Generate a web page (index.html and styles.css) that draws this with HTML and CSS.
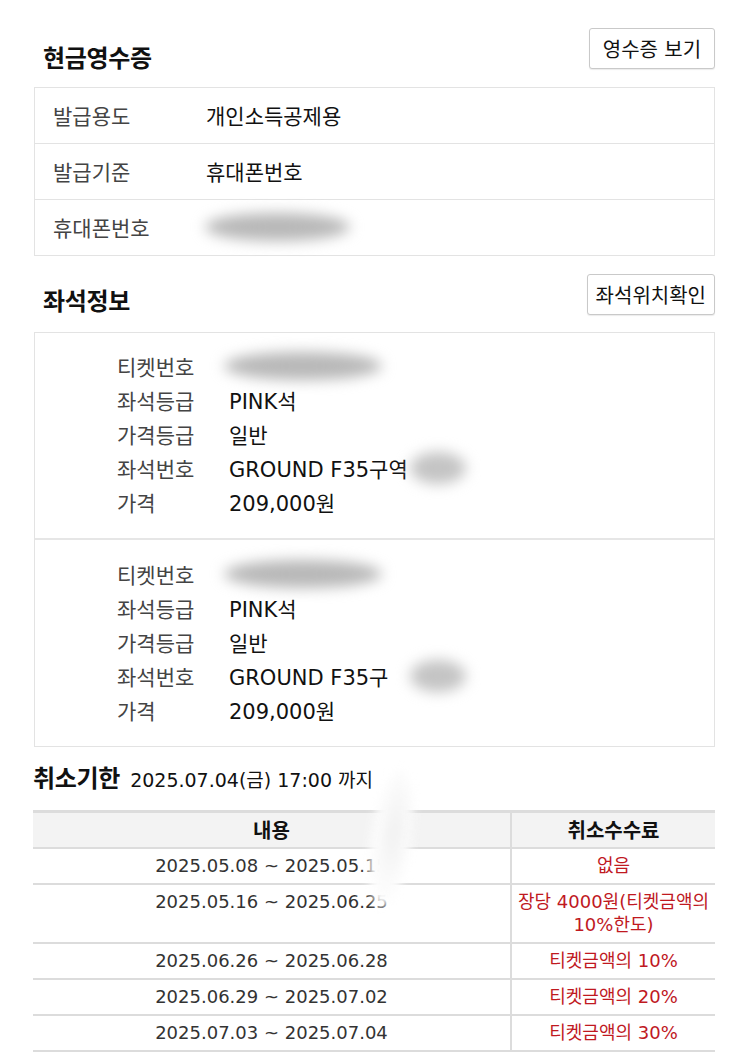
FILE: index.html
```html
<!DOCTYPE html>
<html lang="ko">
<head>
<meta charset="utf-8">
<link rel="stylesheet" href="styles.css">
</head>
<body>
<div class="page">
  <div class="sec-head first">
    <h2 class="sec-title">현금영수증</h2>
    <button class="btn">영수증 보기</button>
  </div>
  <div class="info-table">
    <div class="info-row"><span class="info-label">발급용도</span><span class="info-value">개인소득공제용</span></div>
    <div class="info-row"><span class="info-label">발급기준</span><span class="info-value">휴대폰번호</span></div>
    <div class="info-row"><span class="info-label">휴대폰번호</span><span class="info-value"><span class="blur blur-phone"></span></span></div>
  </div>

  <div class="sec-head">
    <h2 class="sec-title">좌석정보</h2>
    <button class="btn">좌석위치확인</button>
  </div>
  <div class="seat-box">
    <div class="seat-block">
      <div class="seat-line"><span class="seat-label">티켓번호</span><span class="seat-value"><span class="blur blur-ticket"></span></span></div>
      <div class="seat-line"><span class="seat-label">좌석등급</span><span class="seat-value">PINK석</span></div>
      <div class="seat-line"><span class="seat-label">가격등급</span><span class="seat-value">일반</span></div>
      <div class="seat-line"><span class="seat-label">좌석번호</span><span class="seat-value">GROUND F35구역<span class="blur blur-seat"></span></span></div>
      <div class="seat-line"><span class="seat-label">가격</span><span class="seat-value">209,000원</span></div>
    </div>
    <div class="seat-block">
      <div class="seat-line"><span class="seat-label">티켓번호</span><span class="seat-value"><span class="blur blur-ticket"></span></span></div>
      <div class="seat-line"><span class="seat-label">좌석등급</span><span class="seat-value">PINK석</span></div>
      <div class="seat-line"><span class="seat-label">가격등급</span><span class="seat-value">일반</span></div>
      <div class="seat-line"><span class="seat-label">좌석번호</span><span class="seat-value">GROUND F35구<span class="blur blur-seat2"></span></span></div>
      <div class="seat-line"><span class="seat-label">가격</span><span class="seat-value">209,000원</span></div>
    </div>
  </div>

  <div class="cancel-head">
    <h2 class="sec-title">취소기한</h2>
    <span class="cancel-date">2025.07.04(금) 17:00 까지</span>
  </div>
  <div class="fee-wrap">
    <table class="fee-table">
      <thead>
        <tr><th class="col-a">내용</th><th class="col-b">취소수수료</th></tr>
      </thead>
      <tbody>
        <tr><td>2025.05.08 ~ 2025.05.15</td><td class="red">없음</td></tr>
        <tr><td>2025.05.16 ~ 2025.06.25</td><td class="red">장당 4000원(티켓금액의 10%한도)</td></tr>
        <tr><td>2025.06.26 ~ 2025.06.28</td><td class="red">티켓금액의 10%</td></tr>
        <tr><td>2025.06.29 ~ 2025.07.02</td><td class="red">티켓금액의 20%</td></tr>
        <tr><td>2025.07.03 ~ 2025.07.04</td><td class="red">티켓금액의 30%</td></tr>
      </tbody>
    </table>
    <div class="streak"></div>
  </div>
</div>
</body>
</html>
```

FILE: styles.css
```css
* { box-sizing: border-box; }
html, body {
  margin: 0;
  padding: 0;
  background: #ffffff;
}
body {
  font-family: "DejaVu Sans", "Noto Sans CJK KR", sans-serif;
  color: #111;
}
.page {
  width: 750px;
  padding: 0 35px 0 34px;
}
.sec-head {
  display: flex;
  justify-content: space-between;
  align-items: center;
  margin-top: 18px;
  height: 41px;
}
.sec-head.first {
  margin-top: 0;
  padding-top: 28px;
  height: 69px;
}
.sec-title {
  margin: 0;
  font-family: "Noto Sans CJK KR", sans-serif;
  font-size: 24px;
  font-weight: 700;
  color: #111;
  line-height: 30px;
  padding-left: 9px;
  letter-spacing: -0.3px;
}
.sec-head.first .sec-title { padding-top: 17px; }
.sec-head .sec-title { padding-top: 11px; }
.btn {
  font-family: "DejaVu Sans", "Noto Sans CJK KR", sans-serif;
  font-size: 20px;
  color: #111;
  background: #fff;
  border: 1px solid #c9c9c9;
  border-radius: 3px;
  height: 41px;
  padding: 0 8px;
  box-shadow: 0 1px 1px rgba(0,0,0,0.08);
}
.sec-head.first .btn { width: 114px; padding: 0; }
.sec-head .btn { min-width: 126px; }

.info-table {
  margin-top: 18px;
  border: 1px solid #e3e3e3;
}
.info-row {
  display: flex;
  align-items: center;
  height: 56px;
  border-top: 1px solid #e3e3e3;
  font-size: 21px;
  padding-left: 18px;
  padding-bottom: 2px;
}
.info-row:first-child { border-top: none; height: 55px; }
.info-label {
  width: 153px;
  color: #444;
}
.info-value {
  color: #111;
}

.blur {
  display: inline-block;
  vertical-align: middle;
  background: #b8b8b8;
  border-radius: 50%;
  filter: blur(7px);
}
.blur-phone { width: 145px; height: 28px; margin-left: -1px; }
.blur-ticket { width: 158px; height: 28px; margin-left: -5px; }
.blur-seat { width: 56px; height: 32px; margin-left: 2px; background: #c4c4c4; }
.blur-seat2 { width: 56px; height: 32px; margin-left: 22px; background: #c4c4c4; }

.seat-box {
  margin-top: 17px;
  border: 1px solid #e3e3e3;
}
.seat-block {
  padding: 16px 0 19px 82px;
}
.seat-block + .seat-block {
  border-top: 2px solid #e6e6e6;
  padding-top: 17px;
}
.seat-line {
  display: flex;
  align-items: center;
  height: 34px;
  font-size: 21px;
}
.seat-label {
  width: 112px;
  color: #444;
}
.seat-value {
  color: #111;
  display: flex;
  align-items: center;
}

.cancel-head {
  display: flex;
  align-items: center;
  margin-top: 15px;
  height: 30px;
}
.cancel-head .sec-title {
  padding-left: 0;
  margin-left: -1px;
}
.cancel-date {
  font-size: 19px;
  color: #111;
  margin-left: 10px;
  padding-top: 2px;
}
.fee-wrap {
  position: relative;
  margin-top: 18px;
  margin-left: -1px;
}
.fee-table {
  width: 682px;
  border-collapse: collapse;
  table-layout: fixed;
  font-size: 18px;
}
.fee-table th {
  font-family: "Noto Sans CJK KR", sans-serif;
  background: #f3f3f3;
  font-weight: 700;
  font-size: 20px;
  color: #111;
  height: 36px;
  line-height: 30px;
  border-top: 3px solid #dcdcdc;
  border-bottom: 2px solid #dcdcdc;
  padding: 0;
}
.col-a { width: 478px; }
.col-b { width: 204px; }
.fee-table th + th,
.fee-table td + td {
  border-left: 2px solid #dcdcdc;
}
.fee-table td {
  text-align: center;
  vertical-align: top;
  color: #333;
  line-height: 23px;
  padding: 5px 2px 6px;
  border-bottom: 2px solid #dcdcdc;
}
.fee-table td.red {
  color: #c0191f;
}
.streak {
  position: absolute;
  left: 338px;
  top: -40px;
  width: 40px;
  height: 138px;
  background: radial-gradient(ellipse at 55% 45%, #f0f0f0 0%, #fafafa 45%, #ffffff 75%);
  border-radius: 50%;
  filter: blur(5px);
  transform: rotate(8deg);
}
```
